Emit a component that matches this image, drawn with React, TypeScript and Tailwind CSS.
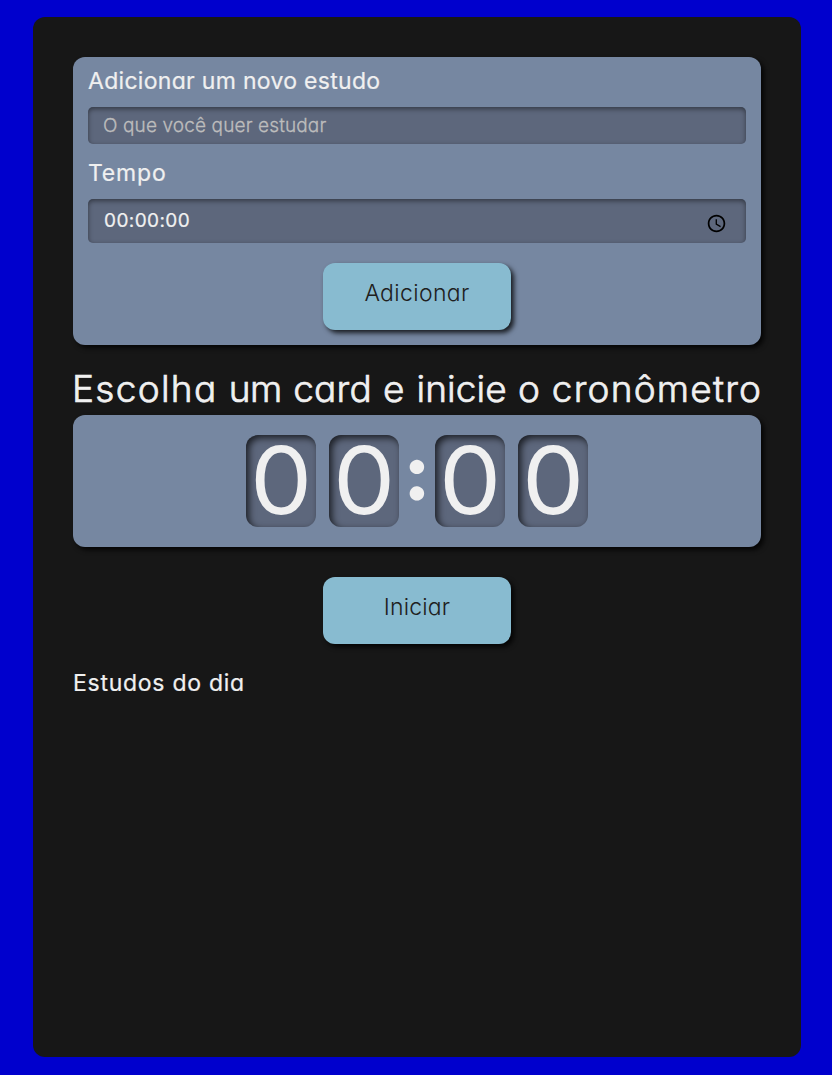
const FONT =
  "font-['Inter','Noto_Sans',sans-serif] [font-feature-settings:'cv11','ss07'_0,'calt'_0]";

const CARD_SHADOW = "shadow-[3px_3px_5px_rgba(0,0,0,0.8)]";

function ClockIcon() {
  return (
    <svg viewBox="0 0 24 24" className="mt-[4px] size-[21px] shrink-0" fill="#000">
      <path d="M11.99 2C6.47 2 2 6.48 2 12s4.47 10 9.99 10C17.52 22 22 17.52 22 12S17.52 2 11.99 2zM12 20c-4.42 0-8-3.58-8-8s3.58-8 8-8 8 3.58 8 8-3.58 8-8 8zm.5-13H11v6l5.25 3.15.75-1.23-4.5-2.67z" />
    </svg>
  );
}

function ActionButton({ label, spacing }: { label: string; spacing: string }) {
  return (
    <button
      className={`h-[67px] w-[188px] rounded-xl bg-[#88bbd0] pb-[7px] text-[23px] leading-7 font-light text-[#202020] shadow-[3px_3px_5px_rgba(0,0,0,0.8)] ${spacing}`}
    >
      {label}
    </button>
  );
}

function Digit({ value }: { value: string }) {
  return (
    <span className="flex h-[92px] w-[70px] items-center justify-center rounded-xl bg-[#5d677c] pb-[2px] text-[91px] leading-none font-light shadow-[inset_3px_3px_7px_rgba(0,0,0,0.7)]">
      <span className="scale-x-[1.09] [-webkit-text-stroke:1.8px_#f0f0f0]">{value}</span>
    </span>
  );
}

export default function App() {
  return (
    <div className={`h-[1075px] w-[832px] bg-[#0000cd] pt-[17px] pl-[33px] text-[#f0f0f0] ${FONT}`}>
      <main className="flex h-[1040px] w-[768px] flex-col rounded-xl bg-[#171717] px-10 pt-10">
        <form className={`h-[288px] rounded-xl bg-[#7687a1] px-[15px] ${CARD_SHADOW}`}>
          <label className="block h-[50px] pt-[8px] text-[23px] leading-8 tracking-[0.3px] [-webkit-text-stroke:0.2px_#f0f0f0]">
            Adicionar um novo estudo
          </label>
          <input
            placeholder="O que você quer estudar"
            className="block h-[37px] w-full rounded-[5px] bg-[#5d677c] px-[15px] text-[19px] font-light tracking-[0.13px] shadow-[inset_0_2px_5px_rgba(0,0,0,0.45)] outline-none placeholder:text-[#bdbdbd] placeholder:[-webkit-text-stroke:0.3px_#bdbdbd]"
          />
          <label className="block h-[55px] pt-[13px] text-[23px] leading-8 tracking-[0.8px] [-webkit-text-stroke:0.2px_#f0f0f0]">
            Tempo
          </label>
          <div className="flex h-[44px] items-center rounded-[5px] bg-[#5d677c] pr-[19px] pl-[16px] shadow-[inset_0_2px_5px_rgba(0,0,0,0.45)]">
            <span className="grow text-[19px] leading-6 tracking-[0.4px] [-webkit-text-stroke:0.2px_#f0f0f0]">00:00:00</span>
            <ClockIcon />
          </div>
          <div className="flex justify-center pt-5">
            <ActionButton label="Adicionar" spacing="tracking-[0.35px]" />
          </div>
        </form>
        <h1 className="-ml-px h-[70px] pt-[20px] text-[37px] leading-12 font-light tracking-[0.75px] whitespace-nowrap [-webkit-text-stroke:0.7px_#f0f0f0]">
          <span className="tracking-[1.3px]">Escolha</span> <span className="tracking-[-0.4px]">um</span>{" "}
          <span className="tracking-[0.2px]">card</span> e <span className="tracking-[0.1px]">inicie</span> o{" "}
          <span className="tracking-[1.2px]">cronômetro</span>
        </h1>
        <section className={`flex h-[132px] items-center justify-center rounded-xl bg-[#7687a1] ${CARD_SHADOW}`}>
          <div className="flex gap-[13px]">
            <Digit value="0" />
            <Digit value="0" />
          </div>
          <span className="flex w-9 justify-center pb-[23px] font-['Lato',sans-serif] text-[76px] leading-none font-black [-webkit-text-stroke:2px_#f0f0f0]">
            :
          </span>
          <div className="flex gap-[13px]">
            <Digit value="0" />
            <Digit value="0" />
          </div>
        </section>
        <div className="flex justify-center pt-[30px]">
          <ActionButton label="Iniciar" spacing="tracking-[0.15px]" />
        </div>
        <h2 className="pt-[23px] text-[23px] leading-8 tracking-[0.73px] [-webkit-text-stroke:0.2px_#f0f0f0]">
          Estudos do dia
        </h2>
      </main>
    </div>
  );
}
